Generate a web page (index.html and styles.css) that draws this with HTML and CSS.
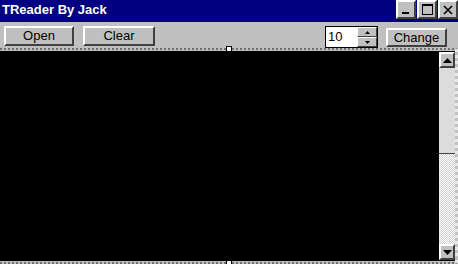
FILE: index.html
```html
<!DOCTYPE html>
<html lang="en">
<head>
  <meta charset="UTF-8">
  <title>TReader By Jack</title>
  <link rel="stylesheet" href="styles.css">
</head>
<body>

<div class="window">
  <div class="titlebar">
    <span class="title">TReader By Jack</span>
    <div class="caption-btns">
      <div class="cap-btn"><svg width="10" height="10" viewBox="0 0 10 10"><rect x="1" y="7" width="7" height="2" fill="#000"/></svg></div>
      <div class="cap-btn"><svg width="11" height="11" viewBox="0 0 11 11"><rect x="0.5" y="0.5" width="10" height="10" fill="none" stroke="#000"/><rect x="0" y="0" width="11" height="2" fill="#000"/></svg></div>
      <div class="cap-btn close"><svg width="10" height="10" viewBox="0 0 10 10"><path d="M1 1 L9 9 M9 1 L1 9" stroke="#000" stroke-width="1.6"/></svg></div>
    </div>
  </div>

  <div class="toolbar">
    <button class="btn btn-open">Open</button>
    <button class="btn btn-clear">Clear</button>
    <div class="spacer"></div>
    <div class="spin">
      <div class="spin-field">10</div>
      <div class="spin-btns">
        <div class="spin-btn"><svg width="5" height="3" viewBox="0 0 5 3"><path d="M2.5 0 L5 3 L0 3 Z" fill="#000"/></svg></div>
        <div class="spin-btn"><svg width="5" height="3" viewBox="0 0 5 3"><path d="M0 0 L5 0 L2.5 3 Z" fill="#000"/></svg></div>
      </div>
    </div>
    <button class="btn btn-change">Change</button>
  </div>

  <div class="frame">
    <span class="grip grip-top"></span>
    <span class="grip grip-left"></span>
    <span class="grip grip-bottom"></span>
    <div class="memo">
      <div class="memo-text"></div>
      <div class="scrollbar">
        <div class="sb-btn"><svg width="9" height="5" viewBox="0 0 9 5"><path d="M4.5 0 L9 5 L0 5 Z" fill="#000"/></svg></div>
        <div class="sb-thumb"></div>
        <div class="sb-track"></div>
        <div class="sb-btn"><svg width="9" height="5" viewBox="0 0 9 5"><path d="M0 0 L9 0 L4.5 5 Z" fill="#000"/></svg></div>
      </div>
    </div>
  </div>
</div>

</body>
</html>
```

FILE: styles.css
```css
body {
  margin: 0;
  padding: 0;
  font-family: "Liberation Sans", Arial, sans-serif;
  background-color: #c0c0c0;
}
.window {
  width: 458px;
  height: 264px;
  display: flex;
  flex-direction: column;
  overflow: hidden;
}
.titlebar {
  height: 22px;
  background-color: #000080;
  display: flex;
  align-items: flex-start;
  justify-content: space-between;
}
.title {
  color: white;
  font-weight: bold;
  font-size: 13px;
  line-height: 20px;
  padding-left: 2px;
}
.caption-btns {
  display: flex;
  gap: 1px;
}
.cap-btn {
  width: 16px;
  height: 15px;
  background-color: #c0c0c0;
  border: 2px solid;
  border-color: #fff #404040 #404040 #fff;
  display: flex;
  align-items: center;
  justify-content: center;
}
.toolbar {
  height: 26px;
  display: flex;
  align-items: flex-start;
  padding-left: 4px;
  padding-right: 11px;
}
.btn {
  font-family: "Liberation Sans", Arial, sans-serif;
  font-size: 13px;
  background-color: #c0c0c0;
  color: #000;
  border: 2px solid;
  border-color: #fff #404040 #404040 #fff;
  padding: 0;
  height: 20px;
  line-height: 14px;
}
.btn-open {
  margin-top: 4px;
  width: 70px;
}
.btn-clear {
  margin-top: 4px;
  margin-left: 9px;
  width: 72px;
}
.btn-change {
  margin-top: 6px;
  margin-left: 8px;
  width: 61px;
  height: 19px;
}
.spacer {
  flex: 1;
}
.spin {
  margin-top: 4px;
  display: flex;
  height: 22px;
  border: 1px solid #000;
  box-sizing: border-box;
}
.spin-field {
  width: 31px;
  background-color: #fff;
  font-size: 13px;
  line-height: 20px;
  padding-left: 2px;
  box-sizing: border-box;
}
.spin-btns {
  width: 20px;
  display: flex;
  flex-direction: column;
}
.spin-btn {
  flex: 1;
  background-color: #c0c0c0;
  border: 1px solid;
  border-color: #fff #404040 #404040 #fff;
  display: flex;
  align-items: center;
  justify-content: center;
}
.frame {
  flex: 1;
  position: relative;
  border-top: 2px dotted #707070;
  border-bottom: 2px dotted #707070;
  border-right: 3px dotted #e8e8e8;
  padding-top: 1px;
  padding-bottom: 1px;
}
.grip {
  position: absolute;
  width: 4px;
  height: 4px;
  background-color: #fff;
  border: 1px solid #000;
}
.grip-top {
  left: 226px;
  top: -4px;
}
.grip-bottom {
  left: 226px;
  bottom: -4px;
}
.grip-left {
  left: -2px;
  top: 103px;
  width: 2px;
  height: 4px;
  border: none;
}
.memo {
  height: 100%;
  background-color: #000;
  display: flex;
  justify-content: flex-end;
}
.memo-text {
  flex: 1;
}
.scrollbar {
  width: 16px;
  margin: 1px 0;
  display: flex;
  flex-direction: column;
  background-color: #c0c0c0;
}
.sb-btn {
  height: 12px;
  border: 2px solid;
  border-color: #fff #404040 #404040 #fff;
  display: flex;
  align-items: center;
  justify-content: center;
  background-color: #c0c0c0;
}
.sb-thumb {
  height: 85px;
  background-color: #dcdcdc;
  border-bottom: 1px solid #404040;
}
.sb-track {
  flex: 1;
  background-color: #e8e8e8;
  background-image: repeating-conic-gradient(#fff 0 25%, #d0d0d0 0 50%);
  background-size: 2px 2px;
}
```
